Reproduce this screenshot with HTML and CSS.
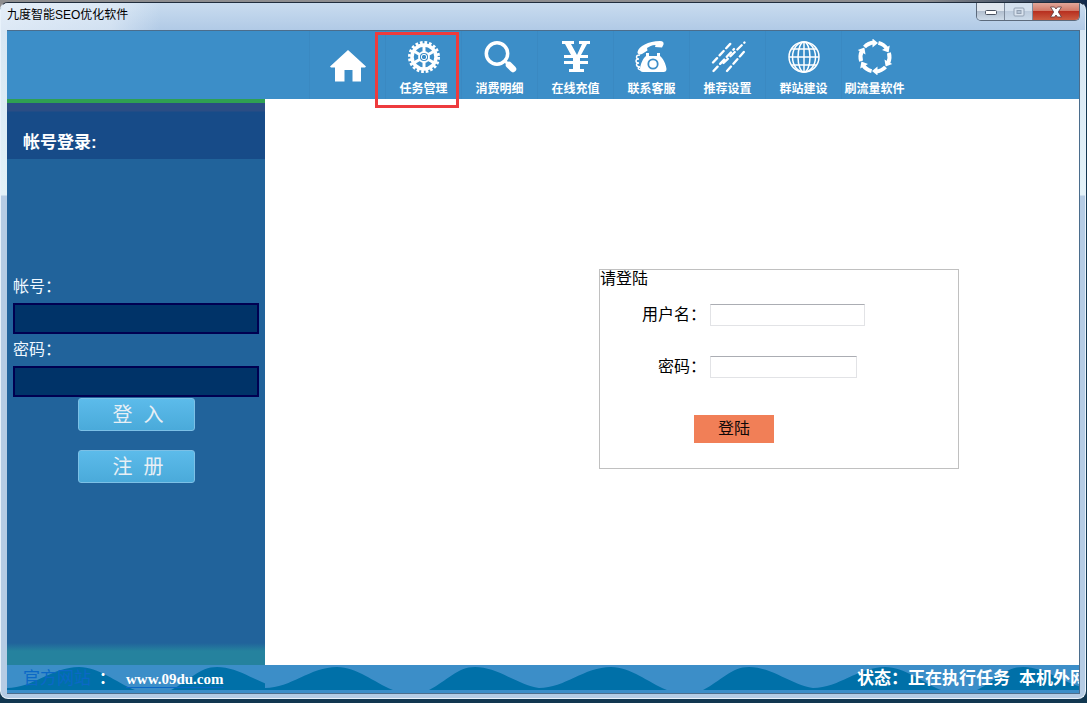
FILE: index.html
```html
<!DOCTYPE html>
<html lang="zh-CN">
<head>
<meta charset="utf-8">
<title>九度智能SEO优化软件</title>
<link rel="stylesheet" href="styles.css">
</head>
<body>
<div class="window">
  <div class="titlebar">
    <h1 class="title">九度智能SEO优化软件</h1>
    <div class="controls">
      <button class="ctl ctl-min" type="button" aria-label="最小化"><svg width="14" height="8" viewBox="0 0 14 8"><rect x="1.500" y="2.500" width="11" height="4" rx="1" fill="#fff" stroke="#4a5260"/></svg></button>
      <button class="ctl ctl-max" type="button" aria-label="最大化" disabled><svg width="12" height="10" viewBox="0 0 12 10"><rect x="1" y="1" width="10" height="8" rx="1" fill="#d8e2ee" stroke="#92a0b2"/><rect x="4" y="3.500" width="4" height="3" fill="#b4c3d5" stroke="#92a0b2"/></svg></button>
      <button class="ctl ctl-close" type="button" aria-label="关闭"><svg width="14" height="12" viewBox="0 0 14 12"><path d="M1.500 1h4L7 3l1.500-2h4L9.300 6l3.200 5h-4L7 9l-1.500 2h-4l3.200-5z" fill="#fff" stroke="#5d3a3e" stroke-width=".8"/></svg></button>
    </div>
  </div>

  <div class="client">
    <nav class="toolbar">
      <a class="tool tool-home" href="#" aria-label="首页">
        <svg class="icon" viewBox="0 0 36 36"><path d="M18 2 36 18.500l-1 1h-4V33.500h-8.500V22h-8v11.500H5V19.500H1l-1-1z" fill="#fff"/></svg>
      </a>
      <a class="tool tool-active" href="#">
        <svg class="icon" viewBox="0 0 36 36" fill="none" stroke="#fff"><circle cx="18" cy="18" r="14.500" stroke-width="3" stroke-dasharray="2.700 1.856"/><circle cx="18" cy="18" r="12" stroke-width="3.500"/><circle cx="18" cy="18" r="5" stroke-width="1.800"/><circle cx="18" cy="18" r="2.700" stroke-width="1"/><path d="M18 13V7M18 23v6M13.700 15.500l-5.200-3M22.300 20.500l5.200 3M13.700 20.500l-5.200 3M22.300 15.500l5.200-3" stroke-width="3"/></svg>
        <span>任务管理</span>
      </a>
      <a class="tool" href="#">
        <svg class="icon" viewBox="0 0 36 36" fill="none" stroke="#fff"><circle cx="15" cy="14.500" r="10.700" stroke-width="3.500"/><path d="m23 22 3 3" stroke-width="3"/><path d="m27 26 4 4" stroke-width="6.500" stroke-linecap="round"/></svg>
        <span>消费明细</span>
      </a>
      <a class="tool" href="#">
        <svg class="icon" viewBox="0 0 36 36" fill="#fff"><path d="M4 2h12v3h-3l6 11 5-11h-3V2h11v3h-3l-6 11h7v3h-8v3h8v3h-8v5h4v3H11v-3h4v-5H6v-3h9v-3H6v-3h7L7 5H4z"/></svg>
        <span>在线充值</span>
      </a>
      <a class="tool" href="#">
        <svg class="icon" viewBox="0 0 36 36"><path d="M3.500 13C5 7 14 2.500 26 2c3 0 4 1.500 3.500 3.500l-1.500 3-7-.5.500-2c-4 0-6 1.500-8.500 3l.5 2.500L8 15c-2 1-5 0-4.500-2z" fill="#fff"/><path d="M12 14h3v3h8v-3h3v3c3 2 6 8 6.500 13 0 2-1 3-3 3H9c-2 0-3-1-3-3 .5-5 3-11 6-13z" fill="#fff"/><circle cx="19" cy="25" r="4.700" fill="none" stroke="#3c8ec8" stroke-width="1.800"/><path d="M6 16c-5 0-4 4-1 4-4 0-4 4 0 4-4 0-3 4 1 4-3 1-2 3 2 3" fill="none" stroke="#fff" stroke-width="1.400"/></svg>
        <span>联系客服</span>
      </a>
      <a class="tool" href="#">
        <svg class="icon" viewBox="0 0 36 36" fill="none" stroke="#fff" stroke-width="2.300" stroke-linecap="round" stroke-dasharray="6 3.700"><path d="M3 23.500 21.500 3.500M3.500 32 24 10M13.500 24 34.500 3.500M17 32 35.500 11"/></svg>
        <span>推荐设置</span>
      </a>
      <a class="tool" href="#">
        <svg class="icon" viewBox="0 0 36 36" fill="none" stroke="#fff" stroke-width="1.500"><circle cx="18" cy="18" r="15"/><ellipse cx="18" cy="18" rx="6" ry="15"/><ellipse cx="18" cy="18" rx="11.500" ry="15"/><path d="M18 3v30M3 18h30M5.500 10h25M5.500 26h25"/></svg>
        <span>群站建设</span>
      </a>
      <a class="tool tool-last" href="#">
        <svg class="icon" viewBox="0 0 36 36"><defs><g id="arc-arrow"><path d="M7.500 8A14.500 14.500 0 0 1 17 3.500" fill="none" stroke="#fff" stroke-width="4"/><path d="m15.500-.5 5.500 4.500-5.500 4.500z" fill="#fff"/></g></defs><use href="#arc-arrow"/><use href="#arc-arrow" transform="rotate(60 18 18)"/><use href="#arc-arrow" transform="rotate(120 18 18)"/><use href="#arc-arrow" transform="rotate(180 18 18)"/><use href="#arc-arrow" transform="rotate(240 18 18)"/><use href="#arc-arrow" transform="rotate(300 18 18)"/></svg>
        <span>刷流量软件</span>
      </a>
    </nav>

    <div class="body">
      <aside class="sidebar">
        <h2 class="side-title">帐号登录:</h2>
        <form class="side-form">
          <label class="side-label" for="account">帐号：</label>
          <input class="side-input" id="account" type="text">
          <label class="side-label" for="password">密码：</label>
          <input class="side-input" id="password" type="password">
          <div class="side-actions">
            <button class="side-button" type="button"><span>登</span><span>入</span></button>
            <button class="side-button" type="button"><span>注</span><span>册</span></button>
          </div>
        </form>
      </aside>
      <main class="content">
        <form class="login">
          <h2 class="login-title">请登陆</h2>
          <div class="field">
            <label for="user">用户名：</label>
            <input class="field-input" id="user" type="text">
          </div>
          <div class="field">
            <label for="pass">密码：</label>
            <input class="field-input field-pass" id="pass" type="password">
          </div>
          <button class="login-button" type="button">登陆</button>
        </form>
      </main>
    </div>

    <footer class="footer">
      <div class="foot-left">
        <svg class="waves" aria-hidden="true"><defs><pattern id="wave" width="274" height="25" patternUnits="userSpaceOnUse"><path d="M0 23C26 23 45 2 72 2c20 0 36 15 56 23H0zM164 25c18-9 28-23 46-23 23 0 43 18 64 21v2z" fill="#0070a8"/></pattern></defs><rect width="100%" height="25" fill="url(#wave)"/></svg>
        <a class="site-name" href="#">官方网站</a>
        <span class="site-colon">：</span>
        <a class="site-url" href="#">www.09du.com</a>
      </div>
      <div class="foot-right">
        <svg class="waves" aria-hidden="true"><rect width="100%" height="25" fill="url(#wave)"/></svg>
        <div class="status"><span>状态：正在执行任务</span><span>本机外网</span></div>
      </div>
    </footer>
  </div>
</div>
</body>
</html>
```
FILE: styles.css
```css
*,
*::after {
  box-sizing: border-box;
}

body {
  margin: 0;
  min-height: 100vh;
  display: flex;
  padding: 2px 1px 4px 0;
  background: linear-gradient(to right, #8d8d8f 85%, #10284a) 0 0 / 100% 8px no-repeat, #113750;
  font-family: "Liberation Sans", "Noto Sans CJK SC", sans-serif;
  font-size: 16px;
}

h1,
h2 {
  margin: 0;
  font-weight: normal;
}

button,
input {
  font: inherit;
  margin: 0;
}

a {
  color: inherit;
  text-decoration: none;
}

.window {
  flex: 1;
  min-width: 0;
  display: flex;
  flex-direction: column;
  padding: 0 5px 4px 6px;
  border: 1px solid #e8f2fb;
  border-top-color: #1f2c3c;
  border-radius: 8px;
  background: linear-gradient(#d4e4f2 0, #e3f2f8 192px, #b5cce4 193px);
  overflow: hidden;
}

.titlebar {
  display: flex;
  justify-content: space-between;
  align-items: flex-start;
  height: 27px;
  margin: 0 -5px 0 -6px;
  padding-left: 6px;
  background:
    linear-gradient(to right, rgba(240, 246, 252, .7) 0, rgba(240, 246, 252, .5) 110px, rgba(240, 246, 252, 0) 160px),
    linear-gradient(#c9dcef, #b1cae6);
}

.title {
  font-size: 12px;
  line-height: 25px;
}

.controls {
  display: flex;
  margin-right: 5px;
  border: 1px solid #5c6a7c;
  border-top: 0;
  border-radius: 0 0 5px 5px;
  overflow: hidden;
}

.ctl {
  display: flex;
  align-items: center;
  justify-content: center;
  width: 28px;
  height: 17px;
  padding: 0;
  border: 0;
  border-right: 1px solid #7e8b9c;
  background: linear-gradient(#dfe6ee 45%, #b2bfcf 50%, #cfdce9);
}

.ctl-max {
  background: linear-gradient(#d5e1ee 45%, #bccbdd 50%, #cbdaea);
}

.ctl-close {
  width: 46px;
  border-right: 0;
  background: linear-gradient(#e2a79a 0, #d27a68 45%, #b83020 50%, #cc5c40);
}

.client {
  flex: 1;
  display: flex;
  flex-direction: column;
  min-width: 0;
  border: 1px solid #4b6d8c;
  border-left: 0;
  background: #fff;
}

.toolbar {
  display: flex;
  height: 68px;
  padding-left: 302px;
  background: #3c8ec8;
}

.tool {
  position: relative;
  display: flex;
  flex-direction: column;
  align-items: center;
  width: 76px;
  padding-top: 8px;
  border-left: 1px solid #3a89c2;
  color: #fff;
  font-size: 12px;
  font-weight: bold;
  line-height: 18px;
  white-space: nowrap;
}

.tool-home {
  padding-top: 17px;
}

.tool-last {
  width: 66px;
}

.tool-active::after {
  content: "";
  position: absolute;
  left: -11px;
  top: 1px;
  width: 84px;
  height: 76px;
  border: 3px solid #ee3b3d;
}

.icon {
  width: 36px;
  height: 36px;
  margin-bottom: 5px;
  flex: none;
}

.body {
  flex: 1;
  display: flex;
}

.sidebar {
  width: 258px;
  flex: none;
  background: linear-gradient(rgba(37, 130, 158, 0), #25829e 8px) 0 100% / 100% 22px no-repeat, #21639b;
}

.side-title {
  height: 60px;
  padding: 27px 16px 0;
  border-top: 4px solid #2fa052;
  background: linear-gradient(#2b4d84 8px, #174b88 9px);
  color: #fff;
  font-size: 17px;
  font-weight: bold;
  line-height: 26px;
}

.side-form {
  display: flex;
  flex-direction: column;
  padding: 112px 6px 0;
  color: #f0f8ff;
}

.side-label {
  line-height: 32px;
}

.side-input {
  width: 100%;
  height: 31px;
  padding: 0 6px;
  border: 2px solid #000050;
  background: #003368;
  color: #fff;
}

.side-actions {
  display: flex;
  flex-direction: column;
  align-items: center;
  gap: 19px;
  padding-top: 1px;
}

.side-button {
  display: flex;
  justify-content: center;
  align-items: center;
  gap: 11px;
  width: 117px;
  height: 33px;
  padding: 0 0 0 4px;
  border: 1px solid #7cc0e6;
  border-radius: 3px;
  background: linear-gradient(#5cbbea, #4aaada);
  color: #e8eff5;
  font-size: 20px;
  line-height: 28px;
}

.content {
  flex: 1;
  min-width: 0;
  padding: 170px 0 0 334px;
}

.login {
  width: 360px;
  min-height: 200px;
  border: 1px solid #c0c0c0;
}

.login-title {
  font-size: 16px;
  line-height: 18px;
}

.field {
  display: grid;
  grid-template-columns: 106px auto;
  column-gap: 4px;
  align-items: center;
  justify-content: start;
  margin-bottom: 30px;
  line-height: 22px;
}

.login-title + .field {
  margin-top: 16px;
}

.field label {
  text-align: right;
}

.field-input {
  width: 155px;
  height: 22px;
  padding: 0 3px;
  border: 1px solid #e2e3e6;
  border-top-color: #abadb3;
  background: #fff;
}

.field-pass {
  width: 147px;
}

.login-button {
  display: block;
  width: 80px;
  height: 28px;
  margin: 37px 0 0 94px;
  padding: 0;
  border: 0;
  background: #f17f57;
  color: #100808;
  line-height: 26px;
}

.footer {
  display: flex;
  height: 28px;
  background: #3c8ec8;
  color: #fff;
  line-height: 28px;
}

.foot-left,
.foot-right {
  position: relative;
  display: flex;
  overflow: hidden;
}

.foot-left {
  width: 258px;
  flex: none;
  padding-left: 16px;
}

.foot-right {
  flex: 1;
  min-width: 0;
  padding-left: 592px;
}

.waves {
  position: absolute;
  left: 0;
  top: 0;
  width: 100%;
  height: 25px;
}

.site-name,
.site-colon,
.site-url,
.status {
  position: relative;
  white-space: nowrap;
}

.site-name {
  width: 76px;
  color: #0b68c6;
  font-size: 17px;
}

.site-colon {
  width: 27px;
  font-weight: bold;
}

.site-url {
  font-family: "Liberation Serif", serif;
  font-size: 15px;
  font-weight: bold;
  text-decoration: underline;
  text-decoration-color: #0b68c6;
  text-underline-offset: 3px;
}

.status {
  display: flex;
  gap: 9px;
  font-size: 17px;
  font-weight: bold;
}
```
